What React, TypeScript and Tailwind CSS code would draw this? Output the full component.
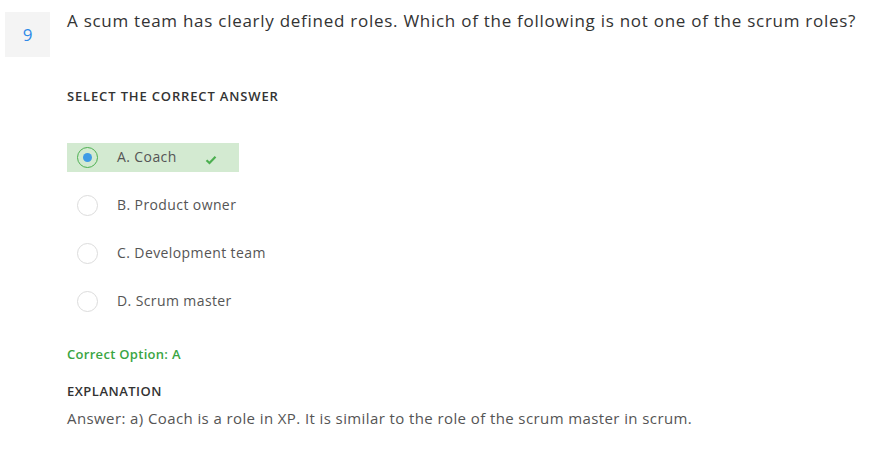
import React from "react";

const options = [
  { key: "A", label: "A. Coach", selected: true },
  { key: "B", label: "B. Product owner" },
  { key: "C", label: "C. Development team" },
  { key: "D", label: "D. Scrum master" },
];

export default function App() {
  return (
    <div className="w-[885px] h-[469px] bg-white text-[#333] font-['Open_Sans',sans-serif]">
      <div className="flex pt-[12px] pl-[5px]">
        <div className="w-[45px] h-[45px] bg-[#f4f4f4] flex items-center justify-center text-[#2f8ae8] text-[17px]">9</div>
        <div className="ml-[17px] -mt-[3px] text-[17px] tracking-[0.73px] leading-[24px] text-[#333]">
          A scum team has clearly defined roles. Which of the following is not one of the scrum roles?
        </div>
      </div>
      <div className="pl-[67px]">
        <div className="mt-[31px] text-[13px] tracking-[0.85px] font-semibold leading-[16px] text-[#333]">SELECT THE CORRECT ANSWER</div>
        <div className="mt-[39px] flex flex-col gap-[19px]">
          {options.map((o) => (
            <div
              key={o.key}
              className={`flex items-center h-[29px] pl-[10px] ${o.selected ? "w-[172px] bg-[#d3ead1]" : ""}`}
            >
              <div
                className={`w-[21px] h-[21px] rounded-full flex items-center justify-center ${
                  o.selected ? "border border-[#4caf50]" : "border border-[#dcdcdc] bg-white"
                }`}
              >
                {o.selected && <div className="w-[9px] h-[9px] rounded-full bg-[#3f9be6]" />}
              </div>
              <span className="ml-[19px] -mt-[2px] text-[14px] tracking-[0.4px] leading-[18px] text-[#555]">{o.label}</span>
              {o.selected && (
                <svg className="ml-[28px] mt-[4px]" width="12" height="10" viewBox="0 0 12 10">
                  <path d="M1.5 5.2 L4.5 8 L10.5 1.8" fill="none" stroke="#4caf50" strokeWidth="2.2" />
                </svg>
              )}
            </div>
          ))}
        </div>
        <div className="mt-[29px] text-[13px] tracking-[0.3px] leading-[18px] font-semibold text-[#3aa543]">Correct Option: A</div>
        <div className="mt-[19px] text-[13px] tracking-[0.5px] leading-[18px] font-semibold text-[#333]">EXPLANATION</div>
        <div className="mt-[8px] text-[15px] tracking-[0.4px] leading-[20px] text-[#555]">
          Answer: a) Coach is a role in XP. It is similar to the role of the scrum master in scrum.
        </div>
      </div>
    </div>
  );
}
